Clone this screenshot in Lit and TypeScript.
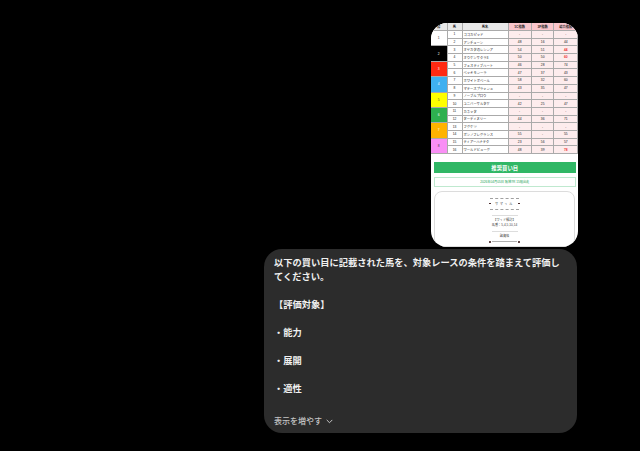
import { LitElement, html, css } from "lit";
import { customElement } from "lit/decorators.js";

type Row = [string, string, string, string];
const groups: { color: string; fg: string; rows: Row[] }[] = [
  { color: "#ffffff", fg: "#333", rows: [["ココカピッド", "-", "-", "-"], ["アンチューン", "48", "16", "44"]] },
  { color: "#000000", fg: "#fff", rows: [["オヤカタのレンシア", "54", "51", "!44"], ["オウケンサクラ3", "50", "50", "!60"]] },
  { color: "#ff2a12", fg: "#fff", rows: [["フェスティブハート", "46", "28", "74"], ["ベッキモシーラ", "47", "37", "43"]] },
  { color: "#3fb0f0", fg: "#fff", rows: [["ホワイトボベール", "58", "32", "60"], ["マテースプラッシュ", "43", "35", "47"]] },
  { color: "#ffff00", fg: "#444", rows: [["ノーブルプロウ", "-", "-", "-"], ["ユニバーサルタケ", "42", "25", "47"]] },
  { color: "#2eb04f", fg: "#fff", rows: [["カネッタ", "-", "-", "-"], ["ターディヌリー", "44", "36", "71"]] },
  { color: "#ffb300", fg: "#fff", rows: [["フグケツ", "-", "-", "-"], ["ボンノフレグランス", "55", "-", "55"]] },
  { color: "#f98ff5", fg: "#444", rows: [["ティアーハナテク", "23", "56", "57"], ["ワールドビューグ", "48", "39", "!78"]] },
];

@customElement("app-root")
export class AppRoot extends LitElement {
  static styles = css`
    :host {
      display: block;
      height: 451px;
      background: #000;
      font-family: "Liberation Sans", "Noto Sans CJK JP", sans-serif;
      overflow: hidden;
    }
    .page {
      display: flex;
      flex-direction: column;
      align-items: flex-end;
      padding: 23px 63px 0 0;
      gap: 2px;
    }
    .shot {
      width: 147px;
      height: 224px;
      margin-right: -1px;
      background: #fff;
      border-radius: 16px;
      overflow: hidden;
      box-sizing: border-box;
      color: #222;
    }
    .table {
      display: grid;
      grid-template-columns: 16.5px 15px 46px 23.3px 22.7px 1fr;
      grid-template-rows: 8px;
      grid-auto-rows: 7.7px;
      font-size: 3.3px;
      margin-bottom: 8px;
    }
    .cell {
      display: flex;
      align-items: center;
      justify-content: center;
      border-right: 0.7px solid #aaa;
      border-bottom: 0.7px solid #aaa;
      box-sizing: border-box;
      white-space: nowrap;
      overflow: hidden;
    }
    .head { background: #e8e8e8; font-weight: 700; }
    .head.pink { background: #f9c5cb; }
    .name { justify-content: flex-start; padding-left: 1px; }
    .pink { background: #fdeced; }
    .hot { color: #f0322d; font-weight: 700; }
    .waku { grid-row: span 2; }
    .bar {
      margin: 0 2.5px 0 3px;
      height: 11px;
      background: #30b765;
      color: #fff;
      font-size: 5.4px;
      font-weight: 700;
      display: flex;
      align-items: center;
      justify-content: center;
    }
    .date {
      margin: 4px 2.5px 0 3px;
      height: 9.5px;
      border: 0.7px solid #bfe9cf;
      box-sizing: border-box;
      color: #22a455;
      font-size: 3.2px;
      display: flex;
      align-items: center;
      justify-content: center;
    }
    .card {
      margin: 4px 3px 0;
      height: 56px;
      box-sizing: border-box;
      border: 0.7px solid #dcdcdc;
      border-radius: 8px;
      padding-top: 6px;
      display: flex;
      flex-direction: column;
      align-items: center;
      font-size: 3.2px;
      color: #444;
    }
    .deco {
      width: 29px;
      border-top: 0.6px dashed #a0a0a0;
    }
    .logo {
      width: 31px;
      display: flex;
      justify-content: space-between;
      align-items: center;
      height: 10px;
      letter-spacing: 1.6px;
    }
    .dot { width: 1.8px; height: 1.8px; border-radius: 50%; background: #311; }
    .rule { width: 26px; border-top: 0.7px solid #ddd; margin: 3px 0 2px; }
    .deco + .rule { margin-top: 5px; }
    .line { height: 5px; line-height: 5px; }
    .line + .line { margin-top: 0.5px; }
    .foot {
      width: 31px;
      display: flex;
      align-items: center;
      justify-content: space-between;
      margin-top: 2px;
    }
    .foot i { flex: 1; border-top: 0.5px solid #b0b0b0; margin: 0 1px; }
    .bubble {
      width: 313px;
      height: 184px;
      background: #2c2c2c;
      border-radius: 18px;
      box-sizing: border-box;
      padding: 7px 10px 0;
      color: #f0f0f0;
      font-size: 9.25px;
      font-weight: 700;
      line-height: 14px;
    }
    .bubble p { margin: 0; }
    .bubble .block { margin-top: 14px; }
    .more {
      margin-top: 18.500px;
      display: flex;
      align-items: center;
      gap: 3.500px;
      font-size: 8px;
      font-weight: 500;
      color: #c4c4c4;
    }
    .more svg { display: block; }
  `;

  render() {
    return html`<div class="page">
      <div class="shot">
        <div class="table">
          <div class="cell head">枠</div>
          <div class="cell head">馬</div>
          <div class="cell head">馬名</div>
          <div class="cell head pink">1C指数</div>
          <div class="cell head pink">3F指数</div>
          <div class="cell head pink">総合指数</div>
          ${groups.map((g) =>
            g.rows.map(
              (r, i) => html`
                ${i === 0
                  ? html`<div class="cell waku" style="background:${g.color};color:${g.fg}">
                      ${groups.indexOf(g) + 1}
                    </div>`
                  : ""}
                <div class="cell">${groups.indexOf(g) * 2 + i + 1}</div>
                <div class="cell name">${r[0]}</div>
                ${r.slice(1).map((v) =>
                  v.startsWith("!")
                    ? html`<div class="cell pink hot">${v.slice(1)}</div>`
                    : html`<div class="cell pink">${v}</div>`
                )}
              `
            )
          )}
        </div>
        <div class="bar">推奨買い目</div>
        <div class="date">2026年04月05日 阪神7R 15頭出走</div>
        <div class="card">
          <div class="deco"></div>
          <div class="logo"><span class="dot"></span><span>サマイル</span><span class="dot"></span></div>
          <div class="deco"></div>
          <div class="rule"></div>
          <div class="line">【ワイド検討】</div>
          <div class="line">馬番：5,4,5,10,14</div>
          <div class="rule"></div>
          <div class="line">諸資格</div>
          <div class="foot"><span class="dot"></span><i></i><span class="dot"></span></div>
        </div>
      </div>
      <div class="bubble">
        <p>以下の買い目に記載された馬を、対象レースの条件を踏まえて評価してください。</p>
        <p class="block">【評価対象】</p>
        <p class="block">・能力</p>
        <p class="block">・展開</p>
        <p class="block">・適性</p>
        <div class="more">
          <span>表示を増やす</span>
          <svg width="7" height="5" viewBox="0 0 7 5" fill="none" stroke="#c4c4c4" stroke-width="1">
            <path d="M.7.9l2.8 2.8L6.300.9" />
          </svg>
        </div>
      </div>
    </div>`;
  }
}
